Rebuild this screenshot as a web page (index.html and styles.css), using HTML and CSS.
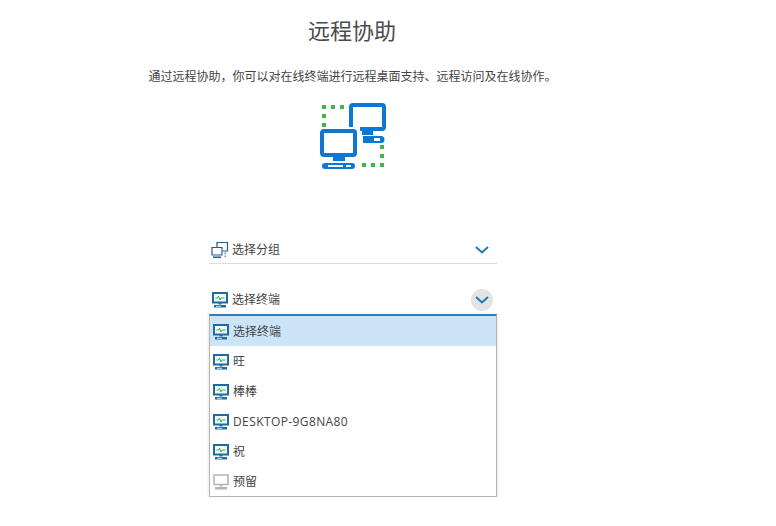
FILE: index.html
```html
<!DOCTYPE html>
<html lang="zh-CN">
<head>
    <meta charset="UTF-8">
    <title>远程协助</title>
    <link rel="stylesheet" href="styles.css">
</head>
<body>
    <svg width="0" height="0" class="defs">
        <symbol id="terminal" viewBox="0 0 16 16">
            <path d="M1 1h14v9.500H1z" fill="#f2f8fc" stroke="currentColor" stroke-width="2"/>
            <path d="M3.500 6h2l1-2 1.500 4 1-2h3.500" fill="none" stroke="#3fae5a" stroke-width="1"/>
            <path d="M6.500 11h3v1.500h-3zM2 13h12v2.600H2z" fill="currentColor"/>
            <path d="M4 14.300h5" stroke="#fff" stroke-width="0.800"/>
        </symbol>
    </svg>
    <div class="page">
        <h1>远程协助</h1>
        <p class="intro">通过远程协助，你可以对在线终端进行远程桌面支持、远程访问及在线协作。</p>
        <svg class="hero" width="70" height="72" viewBox="0 0 70 72">
            <g fill="#3fb54a">
                <rect x="4" y="5" width="4" height="4"/><rect x="13" y="5" width="4" height="4"/><rect x="22" y="5" width="4" height="4"/>
                <rect x="4" y="14" width="4" height="4"/><rect x="4" y="23" width="4" height="4"/>
                <rect x="62" y="45" width="4" height="4"/><rect x="62" y="54" width="4" height="4"/><rect x="62" y="63" width="4" height="4"/>
                <rect x="44" y="63" width="4" height="4"/><rect x="53" y="63" width="4" height="4"/>
            </g>
            <g fill="#0c78d2">
                <rect x="33" y="5" width="33" height="24" rx="2" fill="none" stroke="#0c78d2" stroke-width="4"/>
                <path d="M44 31h11v4H44z"/>
                <path fill-rule="evenodd" d="M45 36h18a3.500 3.500 0 0 1 0 7H45zM56 38v3h6v-3z"/>
                <path d="M0 27h42v33H0z" fill="#fff"/>
                <rect x="4" y="31" width="33" height="24" rx="2" fill="none" stroke="#0c78d2" stroke-width="4"/>
                <path d="M15 57h12v4H15z"/>
                <path fill-rule="evenodd" d="M7 63h27a3 3 0 0 1 0 6H7a3 3 0 0 1 0-6zm3 2v2h15v-2zm18 0v2h5v-2z"/>
            </g>
        </svg>

        <div class="field group-field">
            <svg class="icon" width="18" height="18" viewBox="0 0 18 18">
                <path d="M6 6V1.500h10.500V10H12M1 6.500h10V14H1z" fill="none" stroke="#1f5f8f" stroke-width="1.200"/>
                <path d="M13.500 11.500h1.500v1.500h-1.500zM13.500 14.500h1.500V16h-1.500z" fill="#5b8fb3"/>
                <path d="M2 15.500h8V17H2z" fill="#1f5f8f"/>
            </svg>
            <span class="label">选择分组</span>
            <span class="arrow"><svg width="14" height="8" viewBox="0 0 14 8"><path d="M1 1l6 5.500L13 1" fill="none" stroke="#1f7cae" stroke-width="2"/></svg></span>
        </div>

        <div class="field open">
            <svg class="icon term"><use href="#terminal"/></svg>
            <span class="label">选择终端</span>
            <span class="arrow"><svg width="14" height="8" viewBox="0 0 14 8"><path d="M1 1l6 5.500L13 1" fill="none" stroke="#1f7cae" stroke-width="2"/></svg></span>
        </div>
        <ul class="menu">
            <li class="selected"><svg class="icon term"><use href="#terminal"/></svg><span>选择终端</span></li>
            <li><svg class="icon term"><use href="#terminal"/></svg><span>旺</span></li>
            <li><svg class="icon term"><use href="#terminal"/></svg><span>棒棒</span></li>
            <li><svg class="icon term"><use href="#terminal"/></svg><span class="host">DESKTOP-9G8NA80</span></li>
            <li><svg class="icon term"><use href="#terminal"/></svg><span>祝</span></li>
            <li class="offline">
                <svg class="icon" width="16" height="16" viewBox="0 0 16 16">
                    <path d="M1 1h14v9.500H1z" fill="none" stroke="#b5b5b5" stroke-width="1.600"/>
                    <path d="M6.500 11h3v1.500h-3zM2 13h12v2.400H2z" fill="#b5b5b5"/>
                </svg><span>预留</span>
            </li>
        </ul>
    </div>
</body>
</html>
```

FILE: styles.css
```css
* {
    box-sizing: border-box;
}
body {
    margin: 0;
    background-color: #ffffff;
    color: #444;
    font-family: "Open Sans", "Noto Sans CJK SC", sans-serif;
    font-size: 12px;
}
.defs {
    position: absolute;
}
.page {
    width: 704px;
    display: flex;
    flex-direction: column;
    align-items: center;
}
h1 {
    margin: 16px 0 0;
    font-size: 22px;
    font-weight: 400;
    line-height: 28px;
    color: #4a4a4a;
}
.intro {
    margin: 24px 0 0 1px;
    line-height: 18px;
    color: #444;
}
.hero {
    display: block;
    margin: 14px 0 0 2px;
}
.field {
    width: 288px;
    height: 30px;
    display: flex;
    align-items: center;
    gap: 4px;
    padding: 2px 4px 0 3px;
    border-bottom: 1px solid #ddd;
    margin-left: 2px;
}
.group-field {
    margin-top: 62px;
    gap: 3px;
    padding-left: 2px;
}
.open {
    margin-top: 20px;
    border-bottom: 0;
}
.icon {
    flex: none;
}
.term {
    width: 16px;
    height: 16px;
    color: #1f6a9f;
}
.label {
    flex: 1;
    line-height: 18px;
}
.arrow {
    width: 22px;
    height: 22px;
    border-radius: 50%;
    display: flex;
    align-items: center;
    justify-content: center;
}
.open .arrow {
    background-color: #e3e3e3;
}
.menu {
    width: 288px;
    margin: 0 0 0 2px;
    padding: 0;
    list-style: none;
    background-color: #fff;
    border: 1px solid #b4b4b4;
    border-top: 2px solid #2f7cb0;
    box-shadow: 0 1px 3px rgba(0, 0, 0, 0.15);
}
.menu li {
    height: 30px;
    display: flex;
    align-items: center;
    gap: 4px;
    padding: 2px 0 0 3px;
}
.menu li span {
    line-height: 18px;
}
.menu li .host {
    letter-spacing: 0.4px;
}
.menu .selected {
    background-color: #cce4f7;
}
```
